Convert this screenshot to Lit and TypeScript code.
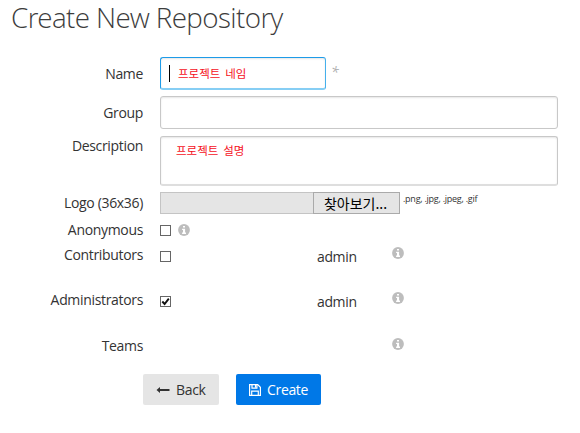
import { LitElement, html, svg, css } from "lit";
import { customElement } from "lit/decorators.js";

const infoIcon = html`<svg class="info" width="12" height="12" viewBox="0 0 12 12">
  <circle cx="6" cy="6" r="5.9" fill="#bdbdbd" />
  <path d="M5 1.9h2v1.7H5zM4.1 4.8h3v3.8h.9v1.3H4.1V8.600h.9V6h-.9z" fill="#fff" />
</svg>`;

const tick = svg`<path d="M2.300 5.500L4.600 8L8.800 2.600" fill="none" stroke="#111" stroke-width="1.900" />`;

const checkbox = (checked: boolean) => html`<svg class="box" width="11" height="11" viewBox="0 0 11 11">
  <rect x=".5" y=".5" width="10" height="10" fill="#fff" stroke="#666" />
  ${checked ? tick : ""}
</svg>`;

@customElement("app-root")
export class AppRoot extends LitElement {
  static styles = css`
    :host {
      display: block;
      box-sizing: border-box;
      width: 580px;
      height: 433px;
      overflow: hidden;
      background: #fff;
      color: #333;
      font: 14px/20px "Open Sans", "Noto Sans CJK KR", sans-serif;
      letter-spacing: -0.33px;
    }
    h1 {
      margin: 0;
      padding: 0 0 0 11px;
      height: 57px;
      font-family: "Open Sans Light", "Open Sans", sans-serif;
      font-size: 27.800px;
      line-height: 35px;
      font-weight: 300;
      letter-spacing: -0.6px;
      color: #3c3c3c;
      box-sizing: border-box;
      white-space: nowrap;
    }
    .row {
      display: grid;
      grid-template-columns: 143px 398px;
      column-gap: 17px;
      align-items: start;
    }
    .label { text-align: right; white-space: nowrap; }
    .controls { display: flex; align-items: flex-start; }
    .name { height: 39px; }
    .name .label { padding-top: 7px; }
    .group { height: 40px; }
    .group .label { padding-top: 7px; }
    .description { height: 56px; }
    .logo { height: 27px; }
    .logo .label { padding-top: 1px; }
    .anonymous { height: 25px; }
    .anonymous .label { padding-top: 1px; }
    .contributors { height: 45px; }
    .contributors .label { padding-top: 1px; }
    .administrators { height: 46px; }
    .administrators .label { padding-top: 1px; }
    .teams { height: 39px; }
    .teams .label { padding-top: 1px; }
    .field {
      box-sizing: border-box;
      width: 398px;
      height: 33px;
      border: 1px solid #c8c8c8;
      border-radius: 3px;
      box-shadow: inset 0 1px 2px rgba(0, 0, 0, 0.1);
      color: #f5101c;
      font: 400 11.500px/16px "Noto Sans CJK KR", sans-serif;
      letter-spacing: 0;
      word-spacing: 2.300px;
      white-space: nowrap;
    }
    .focused {
      display: flex;
      align-items: center;
      width: 166px;
      border-color: #1d9be8 #45b0ec #86cef4 #1d9be8;
      border-bottom-width: 2px;
    }
    .caret { width: 1px; height: 17px; margin: 0 8px 0 8px; background: #000; }
    .area { height: 50px; padding: 5px 0 0 15px; border-bottom: 2px solid #dedede; }
    .required { margin: 5px 0 0 5px; color: #b0b0b0; font-style: italic; font-size: 14px; }
    .path, .browse {
      box-sizing: border-box;
      height: 22px;
      background: #e5e5e5;
      border: 1px solid #c4c4c4;
    }
    .path { width: 153px; border-right: 0; }
    .browse {
      width: 87px;
      padding-right: 2px;
      border-color: #aaa;
      color: #000;
      font: 400 14px/20px "Noto Sans CJK KR", sans-serif;
      letter-spacing: 0;
      text-align: center;
      white-space: nowrap;
    }
    .types { margin-left: 3px; font-size: 9px; line-height: 14px; letter-spacing: -0.25px; white-space: nowrap; }
    svg { display: block; flex: none; }
    .anonymous .box { margin-top: 6px; }
    .anonymous .info { margin: 5px 0 0 7px; }
    .members { display: grid; grid-template-columns: 157px 75px auto; }
    .members .box { margin-top: 7px; }
    .members .user { padding-top: 3px; letter-spacing: -0.36px; }
    .members .info { grid-column: 3; margin-top: 3px; }
    .teams .info { margin-top: 3px; }
    .actions { display: flex; gap: 17px; padding-left: 143px; }
    .button {
      display: flex;
      align-items: center;
      box-sizing: border-box;
      height: 31px;
      padding-left: 13px;
      gap: 6px;
      border-radius: 2px;
    }
    .back { width: 76px; background: #e5e5e5; }
    .create { width: 85px; background: #0078e7; color: #fff; }
  `;

  render() {
    return html`
      <h1>Create New Repository</h1>
      <div class="row name">
        <div class="label">Name</div>
        <div class="controls">
          <div class="field focused"><span class="caret"></span><span>프로젝트 네임</span></div>
          <span class="required">*</span>
        </div>
      </div>
      <div class="row group">
        <div class="label">Group</div>
        <div class="field"></div>
      </div>
      <div class="row description">
        <div class="label">Description</div>
        <div class="field area">프로젝트 설명</div>
      </div>
      <div class="row logo">
        <div class="label">Logo (36x36)</div>
        <div class="controls">
          <div class="path"></div>
          <div class="browse">찾아보기...</div>
          <span class="types">.png, .jpg, .jpeg, .gif</span>
        </div>
      </div>
      <div class="row anonymous">
        <div class="label">Anonymous</div>
        <div class="controls">${checkbox(false)}${infoIcon}</div>
      </div>
      <div class="row contributors">
        <div class="label">Contributors</div>
        <div class="members">${checkbox(false)}<span class="user">admin</span>${infoIcon}</div>
      </div>
      <div class="row administrators">
        <div class="label">Administrators</div>
        <div class="members">${checkbox(true)}<span class="user">admin</span>${infoIcon}</div>
      </div>
      <div class="row teams">
        <div class="label">Teams</div>
        <div class="members">${infoIcon}</div>
      </div>
      <div class="actions">
        <div class="button back">
          <svg width="14" height="12" viewBox="0 0 14 12">
            <path d="M0.500 6L4 3v2h9.500v2H4v2z" fill="#333" />
          </svg>
          Back
        </div>
        <div class="button create">
          <svg width="12" height="12" viewBox="0 0 12 12" fill="none" stroke="#fff" stroke-width="1.200">
            <path d="M.6.6H8.700L11.400 3.300V11.400H.6z" />
            <path d="M3 .6V4.200H7.900V.6M2.700 11.400V7.200H9.300V11.400" />
            <path d="M6.500 1V3.700" />
          </svg>
          Create
        </div>
      </div>
    `;
  }
}
